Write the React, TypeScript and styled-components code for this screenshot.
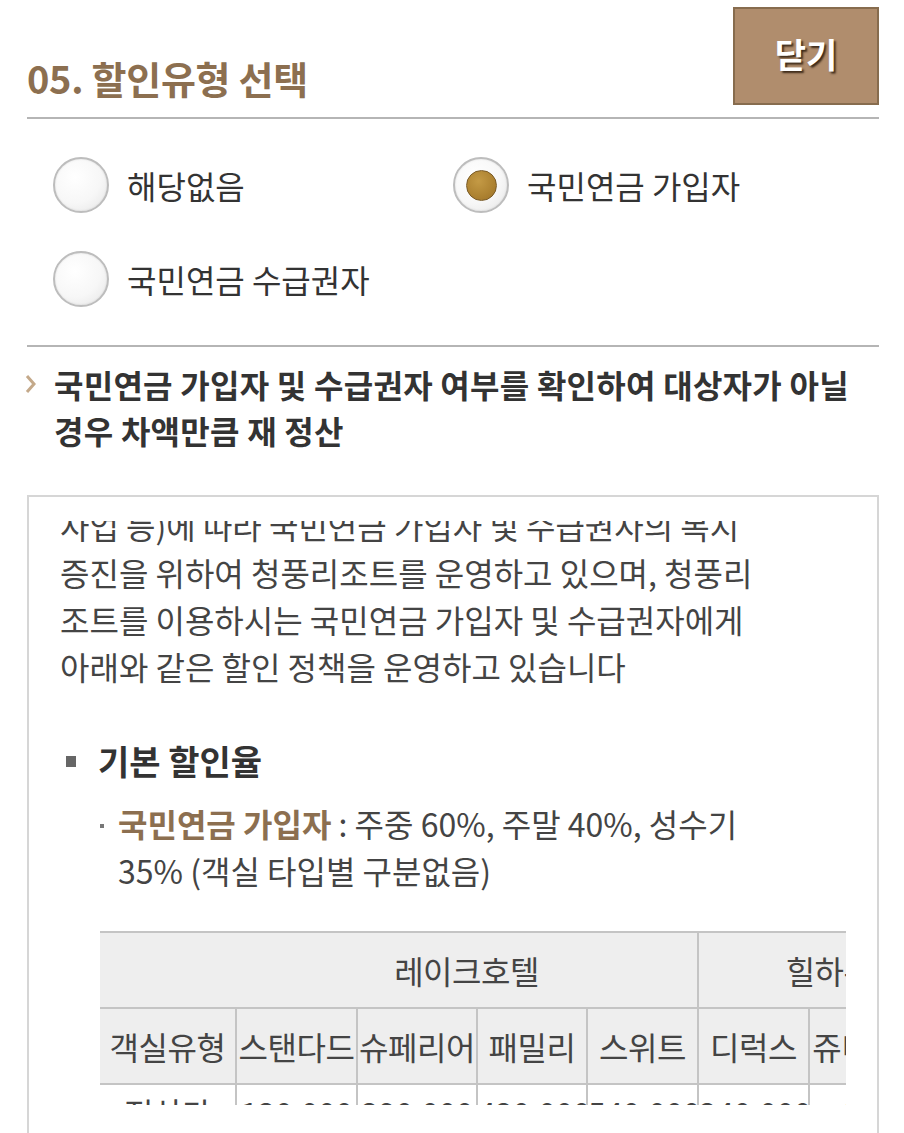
import React, { useLayoutEffect, useRef } from 'react';
import styled, { createGlobalStyle } from 'styled-components';

const GlobalStyle = createGlobalStyle`
  html, body {
    margin: 0;
    padding: 0;
    background: #fff;
  }
  body {
    font-family: "Noto Sans CJK KR", "Noto Sans", sans-serif;
    color: #333;
  }
`;

const Page = styled.div`
  padding: 0 25px 0 27px;
`;

const Header = styled.div`
  display: flex;
  justify-content: space-between;
  align-items: flex-end;
  padding-top: 7px;
  padding-bottom: 12px;
  border-bottom: 2px solid #b5b5b5;
`;

const Title = styled.h2`
  margin: 0 0 5px;
  font-size: 38px;
  line-height: 45px;
  font-weight: 700;
  color: #8c6f50;
  letter-spacing: -0.3px;
`;

const CloseButton = styled.button`
  width: 146px;
  height: 98px;
  box-sizing: border-box;
  padding: 0 0 6px;
  background: #b08d6d;
  border: 2px solid #876c4e;
  color: #fff;
  font-family: inherit;
  font-size: 34px;
  font-weight: 700;
  text-shadow: 2px 2px 2px rgba(40, 25, 10, 0.85);
  cursor: pointer;
`;

const RadioGroup = styled.div`
  display: grid;
  grid-template-columns: 400px 1fr;
  row-gap: 38px;
  padding: 38px 0 38px 26px;
  border-bottom: 2px solid #b5b5b5;
`;

const RadioLabel = styled.label`
  display: flex;
  align-items: center;
  gap: 18px;
  font-size: 32px;
  line-height: 56px;
  color: #333;
  cursor: pointer;
`;

const RadioInput = styled.input`
  appearance: none;
  margin: 0;
  width: 56px;
  height: 56px;
  flex-shrink: 0;
  box-sizing: border-box;
  border-radius: 50%;
  border: 2px solid #bdbdbd;
  background: radial-gradient(circle at 38% 35%, #ffffff 0%, #f7f7f7 55%, #e4e4e4 100%);
  box-shadow: inset 0 0 2px rgba(0, 0, 0, 0.12);
  display: grid;
  place-items: center;
  cursor: pointer;

  &:checked::after {
    content: '';
    width: 31px;
    height: 31px;
    box-sizing: border-box;
    border-radius: 50%;
    border: 1px solid #7a5b27;
    background: radial-gradient(circle at 40% 35%, #c49a45 0%, #ad8231 60%, #9a7028 100%);
  }
`;

const Notice = styled.div`
  display: flex;
  padding-top: 14px;
`;

const Chevron = styled.svg`
  flex-shrink: 0;
  margin: 13px 18px 0 -2px;
`;

const NoticeText = styled.p`
  margin: 0;
  font-size: 32px;
  line-height: 46px;
  font-weight: 700;
  color: #333;
  letter-spacing: 0.25px;
`;

const ContentBox = styled.div`
  margin-top: 42px;
  border: 2px solid #d6d6d6;
  border-bottom: none;
  padding: 24px 31px 60px;
`;

const Scroller = styled.div`
  height: 584px;
  overflow: hidden;
`;

const Paragraph = styled.p`
  margin: 0;
  font-size: 32px;
  line-height: 47px;
  color: #444;
  white-space: nowrap;
`;

const SectionHeading = styled.h3`
  display: flex;
  align-items: center;
  margin: 48px 0 0;
  font-size: 34px;
  line-height: 46px;
  font-weight: 700;
  color: #333;
`;

const Square = styled.span`
  width: 10px;
  height: 11px;
  margin: 0 22px 0 6px;
  background: #666;
`;

const Item = styled.div`
  display: flex;
  margin-top: 16px;
  font-size: 32px;
  line-height: 47px;
  color: #444;
  white-space: nowrap;
`;

const Dot = styled.span`
  flex-shrink: 0;
  width: 4px;
  height: 4px;
  margin: 24px 14px 0 40px;
  background: #777;
`;

const Highlight = styled.strong`
  color: #8c6f50;
  font-weight: 700;
`;

const Table = styled.table`
  margin: 37px 0 0 40px;
  border-collapse: collapse;
  table-layout: fixed;
  width: 889px;
  font-size: 32px;
  color: #444;
  letter-spacing: -0.5px;
`;

const Th = styled.th<{ $noRight?: boolean; $first?: boolean }>`
  height: 74px;
  padding: 0;
  background: #eeeeee;
  font-weight: 400;
  text-align: center;
  white-space: nowrap;
  overflow: hidden;
  border: 2px solid #c4c4c4;
  border-right-style: ${(p) => (p.$noRight ? 'hidden' : 'solid')};
  border-left-style: ${(p) => (p.$first ? 'hidden' : 'solid')};
`;

const Td = styled.td<{ $first?: boolean }>`
  padding: 7px 0 0;
  line-height: 40px;
  vertical-align: top;
  text-align: center;
  white-space: nowrap;
  overflow: hidden;
  border: 2px solid #c4c4c4;
  border-left-style: ${(p) => (p.$first ? 'hidden' : 'solid')};
`;

const columns = [136, 121, 120, 110, 111, 111, 180];
const roomTypes = ['스탠다드', '슈페리어', '패밀리', '스위트', '디럭스', '쥬니어스위트'];
const prices = ['120,000', '290,000', '420,000', '540,000', '240,000', '300,000'];

const options = [
  { id: 'none', label: '해당없음' },
  { id: 'member', label: '국민연금 가입자' },
  { id: 'pensioner', label: '국민연금 수급권자' },
];

const App = () => {
  const scrollRef = useRef<HTMLDivElement>(null);

  useLayoutEffect(() => {
    if (scrollRef.current) scrollRef.current.scrollTop = 66;
  }, []);

  return (
    <Page>
      <GlobalStyle />
      <Header>
        <Title>05. 할인유형 선택</Title>
        <CloseButton type="button">닫기</CloseButton>
      </Header>

      <RadioGroup>
        {options.map((o) => (
          <RadioLabel key={o.id}>
            <RadioInput type="radio" name="discount" defaultChecked={o.id === 'member'} />
            {o.label}
          </RadioLabel>
        ))}
      </RadioGroup>

      <Notice>
        <Chevron width="11" height="20" viewBox="0 0 11 20">
          <polyline points="2,2 9,10 2,18" fill="none" stroke="#c4a98a" strokeWidth="3" />
        </Chevron>
        <NoticeText>
          국민연금 가입자 및 수급권자 여부를 확인하여 대상자가 아닐
          <br />
          경우 차액만큼 재 정산
        </NoticeText>
      </Notice>

      <ContentBox>
        <Scroller ref={scrollRef}>
          <Paragraph>
            국민연금공단은 국민연금법 제46조(복지
            <br />
            사업 등)에 따라 국민연금 가입자 및 수급권자의 복지
            <br />
            증진을 위하여 청풍리조트를 운영하고 있으며, 청풍리
            <br />
            조트를 이용하시는 국민연금 가입자 및 수급권자에게
            <br />
            아래와 같은 할인 정책을 운영하고 있습니다
          </Paragraph>

          <SectionHeading>
            <Square />
            기본 할인율
          </SectionHeading>

          <Item>
            <Dot />
            <div>
              <Highlight>국민연금 가입자</Highlight> : 주중 60%, 주말 40%, 성수기
              <br />
              35% (객실 타입별 구분없음)
            </div>
          </Item>

          <Table>
            <colgroup>
              {columns.map((w, i) => (
                <col key={i} style={{ width: w }} />
              ))}
            </colgroup>
            <thead>
              <tr>
                <Th $first $noRight />
                <Th colSpan={4}>레이크호텔</Th>
                <Th colSpan={2}>힐하우스</Th>
              </tr>
              <tr>
                <Th $first>객실유형</Th>
                {roomTypes.map((t) => (
                  <Th key={t}>{t}</Th>
                ))}
              </tr>
            </thead>
            <tbody>
              <tr>
                <Td $first>정상가</Td>
                {prices.map((p, i) => (
                  <Td key={i}>{p}</Td>
                ))}
              </tr>
            </tbody>
          </Table>
        </Scroller>
      </ContentBox>
    </Page>
  );
};

export default App;
